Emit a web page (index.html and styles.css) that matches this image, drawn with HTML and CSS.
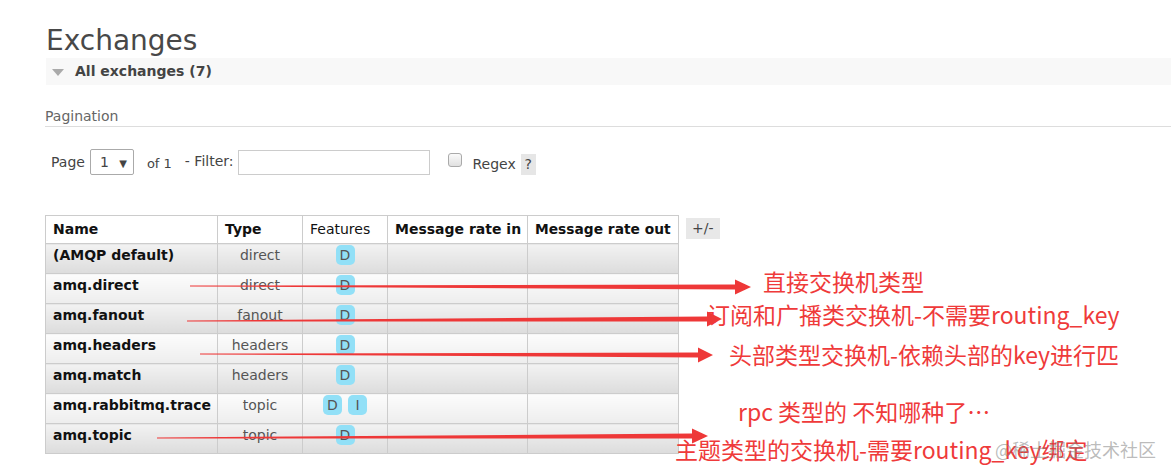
FILE: index.html
```html
<!DOCTYPE html>
<html lang="zh">
<head>
    <meta charset="UTF-8">
    <title>Exchanges</title>
    <link rel="stylesheet" href="styles.css">
</head>
<body>
    <div class="main">
        <h1>Exchanges</h1>
        <div class="section-h"><span class="tri"></span>All exchanges (7)</div>

        <div class="pag-h">Pagination</div>
        <div class="filter-row">
            <span class="lbl">Page</span>
            <span class="select">1 <span class="caret">&#9660;</span></span>
            <span class="lbl of">of 1</span>
            <span class="lbl filter">- Filter:</span>
            <span class="input"></span>
            <span class="check"></span>
            <span class="lbl regex">Regex</span>
            <span class="help">?</span>
        </div>

        <div class="table-wrap">
            <table class="list">
                <thead>
                    <tr>
                        <th class="c-name">Name</th>
                        <th class="c-type">Type</th>
                        <th class="c-feat">Features</th>
                        <th class="c-in">Message rate in</th>
                        <th class="c-out">Message rate out</th>
                    </tr>
                </thead>
                <tbody>
                    <tr class="alt1"><td class="name">(AMQP default)</td><td class="type">direct</td><td class="feat"><span class="badge">D</span></td><td></td><td></td></tr>
                    <tr class="alt2"><td class="name">amq.direct</td><td class="type">direct</td><td class="feat"><span class="badge">D</span></td><td></td><td></td></tr>
                    <tr class="alt1"><td class="name">amq.fanout</td><td class="type">fanout</td><td class="feat"><span class="badge">D</span></td><td></td><td></td></tr>
                    <tr class="alt2"><td class="name">amq.headers</td><td class="type">headers</td><td class="feat"><span class="badge">D</span></td><td></td><td></td></tr>
                    <tr class="alt1"><td class="name">amq.match</td><td class="type">headers</td><td class="feat"><span class="badge">D</span></td><td></td><td></td></tr>
                    <tr class="alt2"><td class="name">amq.rabbitmq.trace</td><td class="type">topic</td><td class="feat"><span class="badge">D</span><span class="badge">I</span></td><td></td><td></td></tr>
                    <tr class="alt1"><td class="name">amq.topic</td><td class="type">topic</td><td class="feat"><span class="badge">D</span></td><td></td><td></td></tr>
                </tbody>
            </table>
            <span class="toggle">+/-</span>
        </div>
    </div>

    <!-- annotations drawn over the screenshot -->
    <svg class="arrows" width="1171" height="475" viewBox="0 0 1171 475">
        <polygon points="190,285.6 735,284.5 735,279.5 751,287 735,294.5 735,289.5 190,286.4"/>
        <polygon points="187,320.6 707,316.5 707,311.5 722,319 707,326.5 707,321.5 187,321.4"/>
        <polygon points="200,353.6 698,352.5 698,347.5 713,355 698,362.5 698,357.5 200,354.4"/>
        <polygon points="157,437.6 692,433.5 692,428.5 708,436 692,443.5 692,438.5 157,438.4"/>
    </svg>
    <span class="note n1">直接交换机类型</span>
    <span class="note n2">订阅和广播类交换机-不需要routing_key</span>
    <span class="note n3">头部类型交换机-依赖头部的key进行匹</span>
    <span class="note n4">rpc 类型的 不知哪种了…</span>
    <span class="note n5">主题类型的交换机-需要routing_key绑定</span>
    <span class="watermark">@稀土掘金技术社区</span>
</body>
</html>
```

FILE: styles.css
```css
body {
    margin: 0;
    font-family: "DejaVu Sans", Verdana, sans-serif;
    font-size: 14px;
    color: #444;
    background: #fff;
    width: 1171px;
    height: 475px;
    overflow: hidden;
    position: relative;
}
.main {
    padding: 24px 0 0 45px;
}
h1 {
    margin: 0 0 0 1px;
    font-size: 28px;
    line-height: 34px;
    font-weight: normal;
    color: #484848;
}
.section-h {
    margin-left: 1px;
    height: 27px;
    line-height: 27px;
    background: #f8f8f8;
    font-weight: bold;
    font-size: 14px;
    color: #444;
    display: flex;
    align-items: center;
}
.tri {
    width: 0;
    height: 0;
    border-left: 6px solid transparent;
    border-right: 6px solid transparent;
    border-top: 7px solid #aaa;
    margin: 1px 11px 0 6px;
}
.pag-h {
    margin-top: 22px;
    padding-bottom: 1px;
    border-bottom: 1px solid #ddd;
    color: #666;
    line-height: 18px;
}
.filter-row {
    display: flex;
    align-items: center;
    padding: 22px 0 0 6px;
    height: 26px;
}
.lbl {
    color: #444;
}
.select {
    margin-left: 5px;
    width: 44px;
    height: 26px;
    box-sizing: border-box;
    border: 1px solid #aaa;
    border-radius: 2px;
    padding-left: 9px;
    line-height: 24px;
    font-size: 14px;
}
.caret {
    font-size: 10px;
    margin-left: 6px;
}
.of {
    margin-left: 13px;
    margin-top: 2px;
    font-size: 13px;
}
.filter {
    margin-left: 13px;
    margin-top: -3px;
}
.input {
    margin-left: 4px;
    width: 192px;
    height: 25px;
    box-sizing: border-box;
    border: 1px solid #ccc;
}
.check {
    margin: -5px 0 0 18px;
    width: 12px;
    height: 12px;
    border: 1px solid #aaa;
    border-radius: 3px;
    background: linear-gradient(#fafafa, #e0e0e0);
}
.regex {
    margin: 4px 0 0 11px;
    font-size: 14px;
}
.help {
    margin: 4px 0 0 5px;
    width: 15px;
    height: 21px;
    background: #e6e6e6;
    text-align: center;
    line-height: 21px;
}
.table-wrap {
    display: flex;
    align-items: flex-start;
    margin-top: 40px;
}
table.list {
    border-collapse: collapse;
    table-layout: fixed;
    width: 634px;
}
table.list th,
table.list td {
    border: 1px solid #ccc;
    padding: 0 7px;
    vertical-align: top;
}
table.list th {
    height: 26px;
    line-height: 27px;
    text-align: left;
    color: #111;
    background: #fff;
    white-space: nowrap;
    overflow: visible;
    padding-right: 2px;
}
th.c-name { width: 162px; }
th.c-type { width: 75px; }
th.c-feat { width: 75px; font-weight: normal; padding-left: 6px; }
th.c-in { width: 130px; }
th.c-out { width: 141px; font-size: 13.8px; }
table.list td {
    height: 29px;
    line-height: 22px;
    white-space: nowrap;
}
tr.alt1 td {
    background: linear-gradient(#f2f2f2, #dcdcdc);
}
tr.alt2 td {
    background: linear-gradient(#fcfcfc, #ededed);
}
td.name {
    font-weight: bold;
    color: #111;
}
td.type {
    text-align: center;
    color: #555;
}
td.feat {
    text-align: center;
    padding-top: 3px;
}
.badge {
    display: inline-block;
    width: 19px;
    height: 20px;
    line-height: 21px;
    margin: 0 3px;
    border-radius: 5px;
    background: #92e0f7;
    color: #555;
    font-size: 14px;
}
.toggle {
    margin: 3px 0 0 7px;
    padding: 0 6px;
    height: 21px;
    line-height: 21px;
    background: #e8e8e8;
    color: #444;
}
.arrows {
    position: absolute;
    left: 0;
    top: 0;
    fill: #ee3838;
}
.note {
    position: absolute;
    font-family: "Noto Sans CJK SC", "Noto Sans", sans-serif;
    font-size: 23px;
    line-height: 23px;
    color: #ef3a3a;
    white-space: nowrap;
}
.n1 { left: 763px; top: 270px; }
.n2 { left: 707px; top: 303px; }
.n3 { left: 729px; top: 343px; }
.n4 { left: 738px; top: 400px; }
.n5 { left: 675px; top: 438px; }
.watermark {
    position: absolute;
    left: 995px;
    top: 439px;
    font-family: "Noto Sans CJK SC", sans-serif;
    font-size: 18px;
    line-height: 20px;
    color: rgba(130, 130, 130, 0.55);
    white-space: nowrap;
}
```
